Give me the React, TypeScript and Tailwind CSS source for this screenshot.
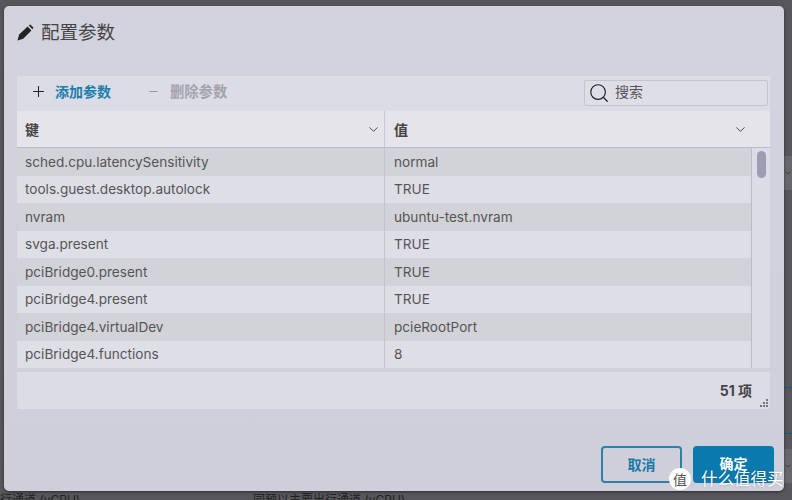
import { ChevronDown, Minus, Plus, Search } from 'lucide-react'

const rows = [
  ['sched.cpu.latencySensitivity', 'normal'],
  ['tools.guest.desktop.autolock', 'TRUE'],
  ['nvram', 'ubuntu-test.nvram'],
  ['svga.present', 'TRUE'],
  ['pciBridge0.present', 'TRUE'],
  ['pciBridge4.present', 'TRUE'],
  ['pciBridge4.virtualDev', 'pcieRootPort'],
  ['pciBridge4.functions', '8'],
]

function PencilIcon() {
  return (
    <svg width="17" height="17" viewBox="0 0 17 17" fill="#222">
      <path d="M0.5 16.5 L2.2 10.6 L10.6 2.6 L14.4 6.4 L6.2 14.7 Z" />
      <path d="M11.8 1.6 L13.2 0.5 L16.4 3.6 L15.4 5.2 Z" />
    </svg>
  )
}

export default function App() {
  return (
    <div className="relative flex h-[500px] w-[792px] flex-col overflow-hidden bg-[#56565b] pl-[4px] pr-[8px] pt-[6px] pb-[9px] font-['Inter','Noto_Sans_CJK_SC',sans-serif] text-[13.6px] text-[#555]">
      {/* page behind the dialog, only its edges show */}
      <div className="absolute right-0 top-[156px] flex h-[34px] w-[8px] items-center bg-[#68686c]">
        <ChevronDown size={10} className="text-[#2a2a2a]" />
      </div>
      <div className="absolute right-0 top-[387px] h-[1px] w-[8px] bg-[#0d5f80]" />
      <div className="absolute right-0 top-[433px] h-[1px] w-[8px] bg-[#0d5f80]" />
      <div className="absolute right-0 top-[449px] flex h-[34px] w-[8px] items-center bg-[#68686c]">
        <ChevronDown size={10} className="text-[#2a2a2a]" />
      </div>
      <span className="absolute left-0 top-[492px] text-[12px] leading-[16px] text-[#222]">行通道 (vCPU)</span>
      <span className="absolute left-[253px] top-[492px] text-[12px] leading-[16px] text-[#222]">同预以主要出行通道 (vCPU)</span>

      <div className="relative flex flex-1 flex-col rounded-[5px] bg-gradient-to-b from-[#d3d3df] to-[#cfcfdb] pl-[13px] pr-[14px] shadow-[0_1px_3px_rgba(0,0,0,0.5)]">
        <div className="flex h-[53px] items-center gap-[7px]">
          <PencilIcon />
          <span className="text-[18.5px] text-[#444]">配置参数</span>
        </div>
        <div className="mt-[17px] flex h-[333px] flex-col rounded-[2px] bg-[#dcdce6]">
          <div className="flex h-[35px] items-center pb-[2px] pl-[14px] pr-[2px]">
            <Plus size={17} strokeWidth={1.5} className="-mt-[2px] -ml-[1px] text-[#222]" />
            <span className="-mt-[2px] ml-[8px] text-[14px] font-bold text-[#1a7fae]">添加参数</span>
            <Minus size={13} className="-mt-[2px] ml-[36px] text-[#999]" />
            <span className="-mt-[2px] ml-[10px] text-[14.3px] font-bold text-[#a3a3ad]">删除参数</span>
            <div className="ml-auto flex h-[26px] w-[184px] items-center gap-[5px] rounded-[2px] border border-[#c4c4d0] bg-[#dedee8] pl-[3px]">
              <Search size={22} strokeWidth={1.3} className="text-[#222]" />
              <span className="-mt-[2px] text-[14px] text-[#555]">搜索</span>
            </div>
          </div>
          <div className="flex h-[37px] border-b border-[#bcbcc4] bg-[#e4e4ea] text-[14px] font-bold text-[#444]">
            <div className="flex w-[368px] items-center justify-between border-r border-[#c8c8d0] pl-[8px] pr-[3px]">
              <span>键</span>
              <ChevronDown size={15} strokeWidth={1.5} className="text-[#444]" />
            </div>
            <div className="flex flex-1 items-center justify-between pl-[9px] pr-[22px]">
              <span>值</span>
              <ChevronDown size={15} strokeWidth={1.5} className="text-[#444]" />
            </div>
          </div>
          <div className="flex h-[224px] overflow-hidden border-b-[4px] border-[#d0d0da]">
            <div className="flex-1 border-r border-[#bcbcc6]">
              {rows.map((row, i) => (
                <div key={row[0]} className={`flex h-[27.5px] items-center ${i % 2 === 0 ? 'bg-[#d2d2d9]' : 'bg-[#dedee7]'}`}>
                  <div className="flex h-full w-[368px] items-center border-r border-[#c4c4cc] pl-[8px]">{row[0]}</div>
                  <div className="pl-[9px]">{row[1]}</div>
                </div>
              ))}
            </div>
            <div className="flex w-[18px] justify-center pt-[3px]">
              <div className="h-[27px] w-[9px] rounded-full bg-[#9d9db4]" />
            </div>
          </div>
          <div className="relative flex flex-1 items-center justify-end pr-[18px] text-[14px] font-bold text-[#444]">
            51 项
            <div className="absolute bottom-[2px] right-[2px] grid grid-cols-3 gap-[1px]">
              {[0, 0, 1, 0, 1, 1, 1, 1, 1].map((on, i) => (
                <span key={i} className={`h-[2px] w-[2px] ${on ? 'bg-[#777]' : ''}`} />
              ))}
            </div>
          </div>
        </div>
        <div className="-mr-[4px] mt-[37px] flex justify-end gap-[11px] text-[14px] font-bold">
          <div className="flex h-[37px] w-[81px] items-center justify-center rounded-[4px] border-2 border-[#2f7fa8] text-[#1a78a8]">取消</div>
          <div className="flex h-[37px] w-[81px] items-start justify-center rounded-[4px] bg-[#0a79ad] pt-[7px] text-white">确定</div>
        </div>
      </div>

      {/* watermark over the corner */}
      <div className="absolute left-[669px] top-[468px] flex items-center gap-[10px]">
        <span className="flex h-[22px] w-[22px] items-center justify-center rounded-full bg-white text-[14px] text-[#555]">值</span>
        <span className="whitespace-nowrap text-[16.5px] leading-[22px] text-white [text-shadow:0_0_2px_rgba(0,0,0,0.25)]">什么值得买</span>
      </div>
    </div>
  )
}
